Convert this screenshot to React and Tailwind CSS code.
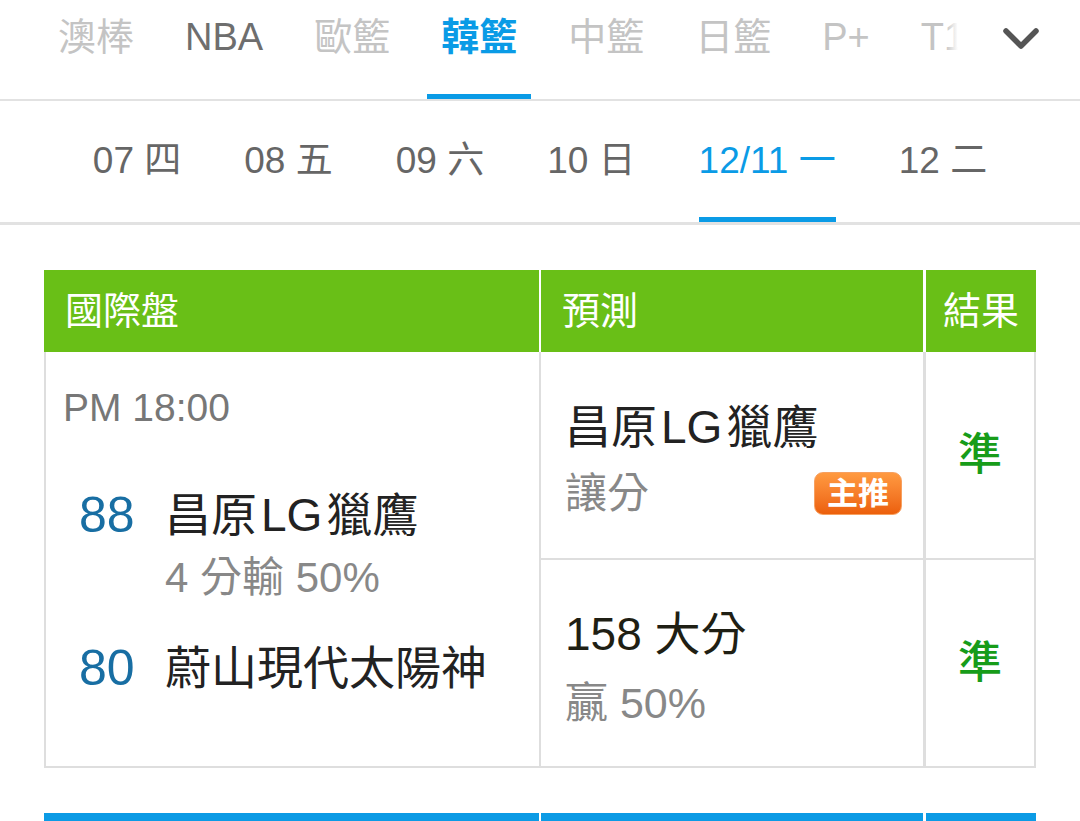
import React from 'react';

const FONT = "font-['Liberation_Sans','Noto_Sans_CJK_TC',sans-serif]";

const leagues = [
  { name: '澳棒', color: 'text-[#c4c4c4]' },
  { name: 'NBA', color: 'text-[#6e6e6e]' },
  { name: '歐籃', color: 'text-[#c4c4c4]' },
  { name: '韓籃', color: 'text-[#0a9be6] font-bold', active: true },
  { name: '中籃', color: 'text-[#c4c4c4]' },
  { name: '日籃', color: 'text-[#c4c4c4]' },
  { name: 'P+', color: 'text-[#c4c4c4]' },
  { name: 'T1', color: 'text-[#c4c4c4]' },
];

const dates = [
  { label: '07 四' },
  { label: '08 五' },
  { label: '09 六' },
  { label: '10 日' },
  { label: '12/11 一', active: true },
  { label: '12 二' },
];

function TableHeader({ bg, titles = [] }) {
  return (
    <div className={`flex h-[82px] ${bg} text-white text-[38px] leading-[82px]`}>
      <div className="w-[495px] pl-[21px]">{titles[0]}</div>
      <div className="w-[2px] bg-white" />
      <div className="w-[382px] pl-[21px]">{titles[1]}</div>
      <div className="w-[3px] bg-white" />
      <div className="flex-1 text-center">{titles[2]}</div>
    </div>
  );
}

function Badge() {
  return (
    <span className="flex items-center justify-center w-[88px] h-[43px] rounded-[9px] border border-[#f7a060] bg-gradient-to-b from-[#ff9a40] to-[#ec5f0a] text-white text-[31px] font-bold leading-none">
      主推
    </span>
  );
}

function TeamName({ pre, latin, post }) {
  return (
    <span className="text-[46px] text-[#222] whitespace-nowrap">
      {pre}
      {latin && <span className="mx-[4px]">{latin}</span>}
      {post}
    </span>
  );
}

export default function App() {
  return (
    <div className={`h-[821px] overflow-hidden bg-white ${FONT}`}>
      {/* League tabs */}
      <div className="relative h-[101px] border-b-2 border-[#e2e2e2]">
        <div className="flex gap-[23px] pl-[44px] overflow-hidden">
          {leagues.map((l) => (
            <div key={l.name} className="flex flex-col justify-between h-[99px] pt-[18px] shrink-0">
              <span className={`px-[14px] text-[38px] leading-[38px] whitespace-nowrap ${l.color}`}>{l.name}</span>
              <div className={`h-[5px] ${l.active ? 'bg-[#0a9be6]' : ''}`} />
            </div>
          ))}
        </div>
        <div className="absolute right-0 top-0 h-[99px] flex">
          <div className="w-[12px] bg-gradient-to-r from-transparent to-white" />
          <div className="w-[122px] bg-white flex items-center pl-[45px] pb-[22px]">
            <svg width="36" height="24" viewBox="0 0 36 24" fill="none">
              <path d="M3 4 L18 19 L33 4" stroke="#555" strokeWidth="5.5" strokeLinecap="round" strokeLinejoin="round" />
            </svg>
          </div>
        </div>
      </div>

      {/* Date tabs */}
      <div className="flex justify-center gap-[63px] h-[124px] border-b-[3px] border-[#e2e2e2]">
        {dates.map((d) => (
          <div key={d.label} className="flex flex-col justify-between pt-[40px]">
            <span className={`text-[37px] leading-[40px] whitespace-nowrap ${d.active ? 'text-[#0a9be6]' : 'text-[#666]'}`}>
              {d.label}
            </span>
            <div className={`h-[5px] ${d.active ? 'bg-[#0a9be6]' : ''}`} />
          </div>
        ))}
      </div>

      {/* Game table */}
      <div className="mx-[44px] mt-[45px]">
        <TableHeader bg="bg-[#69bf17]" titles={['國際盤', '預測', '結果']} />
        <div className="flex h-[416px] border-x-2 border-b-2 border-[#dedede]">
          {/* Match column */}
          <div className="w-[493px] pt-[32px]">
            <div className="pl-[17px] text-[39px] leading-[48px] text-[#777]">PM 18:00</div>
            <div className="flex items-center mt-[55px] h-[56px]">
              <span className="w-[119px] pl-[33px] text-[50px] text-[#186ea3]">88</span>
              <TeamName pre="昌原" latin="LG" post="獵鷹" />
            </div>
            <div className="pl-[119px] mt-[11px] text-[42px] leading-[48px] text-[#888]">4 分輸 50%</div>
            <div className="flex items-center mt-[38px] h-[56px]">
              <span className="w-[119px] pl-[33px] text-[50px] text-[#186ea3]">80</span>
              <TeamName pre="蔚山現代太陽神" />
            </div>
          </div>

          {/* Prediction column */}
          <div className="w-[384px] border-l-2 border-[#dedede] flex flex-col">
            <div className="h-[206px] pl-[24px] pr-[21px] pt-[47px]">
              <div className="flex items-center h-[56px]">
                <TeamName pre="昌原" latin="LG" post="獵鷹" />
              </div>
              <div className="flex items-center justify-between mt-[10px] h-[56px]">
                <span className="text-[42px] text-[#888]">讓分</span>
                <Badge />
              </div>
            </div>
            <div className="flex-1 border-t-2 border-[#dedede] pl-[24px] pt-[46px]">
              <div className="text-[46px] leading-[56px] text-[#1f1f14]">158 大分</div>
              <div className="mt-[13px] text-[43px] leading-[56px] text-[#888]">贏 50%</div>
            </div>
          </div>

          {/* Result column */}
          <div className="flex-1 border-l-[3px] border-[#dedede] flex flex-col">
            <div className="h-[206px] flex items-center justify-center text-[44px] font-medium text-[#179c19]">準</div>
            <div className="flex-1 border-t-2 border-[#dedede] flex items-center justify-center text-[44px] font-medium text-[#179c19]">準</div>
          </div>
        </div>
      </div>

      {/* Next table header, only its top edge is in view */}
      <div className="mx-[44px] mt-[45px]">
        <TableHeader bg="bg-[#0c9be5]" />
      </div>
    </div>
  );
}
